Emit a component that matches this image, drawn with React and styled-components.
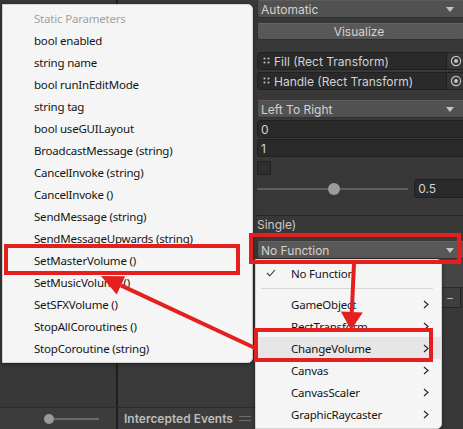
import React from 'react';
import styled, { createGlobalStyle } from 'styled-components';

const GlobalStyle = createGlobalStyle`
  html, body {
    margin: 0;
    padding: 0;
    background: #383838;
  }
  * {
    box-sizing: border-box;
  }
`;

const Screen = styled.div`
  position: relative;
  width: 463px;
  height: 429px;
  overflow: hidden;
  display: flex;
  background: #383838;
  font-family: Inter, "Noto Sans", sans-serif;
`;

/* ---------- background panels ---------- */

const Workspace = styled.div`
  width: 256px;
  flex-shrink: 0;
  display: flex;
  flex-direction: column;
`;

const Columns = styled.div`
  flex: 1;
  display: flex;
`;

const Column = styled.div`
  width: ${props => props.$width};
  flex: ${props => props.$width ? 'none' : 1};
  background: ${props => props.$bg};
  border-right: ${props => props.$divider ? '2px solid #1f1f1f' : 'none'};
`;

const BottomBar = styled.div`
  height: 22px;
  display: flex;
  border-top: 1px solid #2b2b2b;
`;

const BarCell = styled.div`
  width: ${props => props.$width};
  flex: ${props => props.$width ? 'none' : 1};
  display: flex;
  align-items: center;
  background: #3c3c3c;
  border-right: ${props => props.$divider ? '2px solid #1f1f1f' : 'none'};
  padding-left: ${props => props.$pad || '0'};
`;

const ZoomSlider = styled.div`
  position: relative;
  margin-left: 44px;
  width: 55px;
  height: 10px;
  display: flex;
  align-items: center;

  &::before {
    content: '';
    width: 100%;
    height: 2px;
    background: #6a6a6a;
  }
  &::after {
    content: '';
    position: absolute;
    left: 0;
    top: 0;
    width: 10px;
    height: 10px;
    border-radius: 50%;
    background: #9a9a9a;
  }
`;

const BarTitle = styled.span`
  font-size: 12px;
  font-weight: 600;
  color: #bdbdbd;
  white-space: nowrap;
`;

const Grip = styled.span`
  margin-left: 6px;
  width: 12px;
  height: 5px;
  border-top: 1px solid #6a6a6a;
  border-bottom: 1px solid #6a6a6a;
`;

/* ---------- inspector ---------- */

const Inspector = styled.div`
  width: 209px;
  flex-shrink: 0;
  display: flex;
  flex-direction: column;
  padding-left: 1px;
  color: #d2d2d2;
  font-size: 12px;
`;

const Dropdown = styled.div`
  margin-top: ${props => props.$mt || 0}px;
  height: 18px;
  display: flex;
  align-items: center;
  justify-content: space-between;
  padding: 0 10px 0 3px;
  background: ${props => props.$light ? '#585858' : '#515151'};
  border: 1px solid #303030;
  border-top-color: ${props => props.$light ? '#656565' : '#5c5c5c'};
  border-radius: 3px;
  white-space: nowrap;
`;

const Caret = styled.span`
  width: 0;
  height: 0;
  border-left: 4px solid transparent;
  border-right: 4px solid transparent;
  border-top: 5px solid #c4c4c4;
`;

const Button = styled.div`
  margin-top: ${props => props.$mt || 0}px;
  height: 17px;
  display: flex;
  align-items: center;
  justify-content: center;
  background: #585858;
  border: 1px solid #303030;
  border-top-color: #656565;
  border-radius: 3px;
  padding-right: 4px;
`;

const ObjectField = styled.div`
  margin-top: ${props => props.$mt || 0}px;
  height: 18px;
  display: flex;
  background: #2a2a2a;
  border: 1px solid #212121;
  border-radius: 3px;
  overflow: hidden;
`;

const ObjectName = styled.div`
  flex: 1;
  display: flex;
  align-items: center;
  gap: 2px;
  padding-left: 5px;
  white-space: nowrap;
`;

const PickButton = styled.div`
  width: 18px;
  display: flex;
  align-items: center;
  justify-content: flex-end;
  padding-right: 2px;
  background: #353535;
  border-left: 1px solid #1f1f1f;
`;

const TextField = styled.div`
  margin-top: ${props => props.$mt || 0}px;
  width: ${props => props.$width || 'auto'};
  height: ${props => props.$height || 18}px;
  display: flex;
  align-items: center;
  padding-left: 3px;
  background: #2a2a2a;
  border: 1px solid #212121;
  border-radius: 3px;
`;

const Checkbox = styled.div`
  margin-top: ${props => props.$mt || 0}px;
  width: 14px;
  height: 14px;
  background: #2f2f2f;
  border: 1px solid #202020;
  border-radius: 2px;
`;

const SliderRow = styled.div`
  margin-top: ${props => props.$mt || 0}px;
  display: flex;
  align-items: center;
  gap: 6px;
`;

const Track = styled.div`
  position: relative;
  width: 155px;
  height: 2px;
  background: #5e5e5e;
`;

const Knob = styled.div`
  position: absolute;
  left: 71px;
  top: -5px;
  width: 12px;
  height: 12px;
  border-radius: 50%;
  background: #9c9c9c;
`;

const Separator = styled.div`
  margin-top: ${props => props.$mt || 0}px;
  height: 1px;
  background: #262626;
`;

const Label = styled.div`
  height: 18px;
  line-height: 18px;
  color: #c8c8c8;
  white-space: nowrap;
`;

const ListBody = styled.div`
  height: 29px;
  background: #454545;
  border-bottom: 1px solid #2a2a2a;
`;

const ListFooter = styled.div`
  display: flex;
  justify-content: flex-end;
  padding-right: 4px;
`;

const FooterButton = styled.div`
  width: 44px;
  height: 20px;
  display: flex;
  align-items: center;
  justify-content: flex-end;
  padding-right: 6px;
  border: 1px solid #242424;
  border-top: none;
  background: #3e3e3e;
  color: #bbb;
`;

/* ---------- popup menus ---------- */

const Menu = styled.div`
  position: absolute;
  left: ${props => props.$left}px;
  top: ${props => props.$top}px;
  width: ${props => props.$width}px;
  padding: 2px 0 3px;
  background: #f5f5f5;
  border: 1px solid #d4d4d4;
  border-radius: 0 5px 5px 0;
  box-shadow: 0 1px 4px rgba(0, 0, 0, 0.45);
  font-family: "Noto Sans", sans-serif;
  font-size: 11.5px;
  letter-spacing: -0.2px;
  color: #141414;
`;

const MenuItem = styled.div`
  height: 22px;
  display: flex;
  align-items: center;
  padding-left: ${props => props.$indent}px;
  padding-right: 12px;
  color: ${props => props.$muted ? '#a3a3a3' : '#141414'};
  background: ${props => props.$hover ? '#e6e6e6' : 'transparent'};
  white-space: nowrap;
`;

const ItemText = styled.span`
  flex: 1;
`;

const CheckSlot = styled.span`
  width: 35px;
  display: flex;
  padding-left: 10px;
`;

const MenuDivider = styled.div`
  height: 9px;
  display: flex;
  align-items: center;
  padding: 0 8px 0 5px;

  &::after {
    content: '';
    flex: 1;
    height: 1px;
    background: #d6d6d6;
  }
`;

const Annotations = styled.svg`
  position: absolute;
  left: 0;
  top: 0;
  pointer-events: none;
`;

const RED = '#e4201f';

const staticParams = [
  'bool enabled',
  'string name',
  'bool runInEditMode',
  'string tag',
  'bool useGUILayout',
  'BroadcastMessage (string)',
  'CancelInvoke (string)',
  'CancelInvoke ()',
  'SendMessage (string)',
  'SendMessageUpwards (string)',
  'SetMasterVolume ()',
  'SetMusicVolume ()',
  'SetSFXVolume ()',
  'StopAllCoroutines ()',
  'StopCoroutine (string)',
];

const components = ['GameObject', 'RectTransform', 'ChangeVolume', 'Canvas', 'CanvasScaler', 'GraphicRaycaster'];

const DotGrid = () => (
  <svg width="9" height="8" viewBox="0 0 9 8">
    {[1.5, 5.5].map(x => [1.5, 5.5].map(y => (
      <circle key={`${x}-${y}`} cx={x} cy={y} r="1.1" fill="#bdbdbd" />
    )))}
  </svg>
);

const TargetIcon = () => (
  <svg width="12" height="12" viewBox="0 0 12 12">
    <circle cx="6" cy="6" r="4.6" fill="none" stroke="#c4c4c4" strokeWidth="1.2" />
    <circle cx="6" cy="6" r="2" fill="#c4c4c4" />
  </svg>
);

const Chevron = () => (
  <svg width="6" height="9" viewBox="0 0 6 9">
    <polyline points="1,1 5,4.5 1,8" fill="none" stroke="#2a2a2a" strokeWidth="1.2" />
  </svg>
);

const Check = () => (
  <svg width="10" height="8" viewBox="0 0 10 8">
    <polyline points="1,4 3.8,6.8 9,1" fill="none" stroke="#333" strokeWidth="1.1" />
  </svg>
);

// arrow from start to tip, with a triangular head
const Arrow = ({ from, to, head = 20, half = 11 }) => {
  const dx = from[0] - to[0];
  const dy = from[1] - to[1];
  const len = Math.hypot(dx, dy);
  const ux = dx / len;
  const uy = dy / len;
  const bx = to[0] + ux * head;
  const by = to[1] + uy * head;
  const px = -uy * half;
  const py = ux * half;
  return (
    <g>
      <line x1={from[0]} y1={from[1]} x2={bx} y2={by} stroke={RED} strokeWidth="4" />
      <polygon points={`${to[0]},${to[1]} ${bx + px},${by + py} ${bx - px},${by - py}`} fill={RED} />
    </g>
  );
};

const App = () => (
  <>
    <GlobalStyle />
    <Screen>
      <Workspace>
        <Columns>
          <Column $width="118px" $bg="#383838" $divider />
          <Column $bg="#3a3a3a" />
        </Columns>
        <BottomBar>
          <BarCell $width="118px" $divider>
            <ZoomSlider />
          </BarCell>
          <BarCell $pad="6px">
            <BarTitle>Intercepted Events</BarTitle>
            <Grip />
          </BarCell>
        </BottomBar>
      </Workspace>

      <Inspector>
        <Dropdown>Automatic<Caret /></Dropdown>
        <Button $mt={5}>Visualize</Button>
        <ObjectField $mt={12}>
          <ObjectName><DotGrid />Fill (Rect Transform)</ObjectName>
          <PickButton><TargetIcon /></PickButton>
        </ObjectField>
        <ObjectField $mt={2}>
          <ObjectName><DotGrid />Handle (Rect Transform)</ObjectName>
          <PickButton><TargetIcon /></PickButton>
        </ObjectField>
        <Dropdown $mt={10}>Left To Right<Caret /></Dropdown>
        <TextField $mt={2}>0</TextField>
        <TextField $mt={1}>1</TextField>
        <Checkbox $mt={4} />
        <SliderRow $mt={4}>
          <Track><Knob /></Track>
          <TextField $width="52px" $height={19}>0.5</TextField>
        </SliderRow>
        <Separator $mt={17} />
        <Label>Single)</Label>
        <Dropdown $mt={7} $light>No Function<Caret /></Dropdown>
        <ListBody />
        <ListFooter>
          <FooterButton>−</FooterButton>
        </ListFooter>
      </Inspector>

      <Menu $left={2} $top={4} $width={251}>
        <MenuItem $indent={31} $muted>Static Parameters</MenuItem>
        {staticParams.map(name => (
          <MenuItem key={name} $indent={31}>{name}</MenuItem>
        ))}
      </Menu>

      <Menu $left={255} $top={259} $width={187}>
        <MenuItem $indent={0}>
          <CheckSlot><Check /></CheckSlot>
          <ItemText>No Function</ItemText>
        </MenuItem>
        <MenuDivider />
        {components.map(name => (
          <MenuItem key={name} $indent={35} $hover={name === 'ChangeVolume'}>
            <ItemText>{name}</ItemText>
            <Chevron />
          </MenuItem>
        ))}
      </Menu>

      <Annotations width="463" height="429" viewBox="0 0 463 429">
        <rect x="6" y="246" width="232" height="27" fill="none" stroke={RED} strokeWidth="4" />
        <rect x="251" y="235" width="208" height="27" fill="none" stroke={RED} strokeWidth="4" />
        <rect x="256" y="330" width="175" height="30" fill="none" stroke={RED} strokeWidth="4" />
        <Arrow from={[354, 263]} to={[351, 330]} head={18} half={11} />
        <Arrow from={[255, 348]} to={[101, 276]} head={22} half={10} />
      </Annotations>
    </Screen>
  </>
);

export default App;
